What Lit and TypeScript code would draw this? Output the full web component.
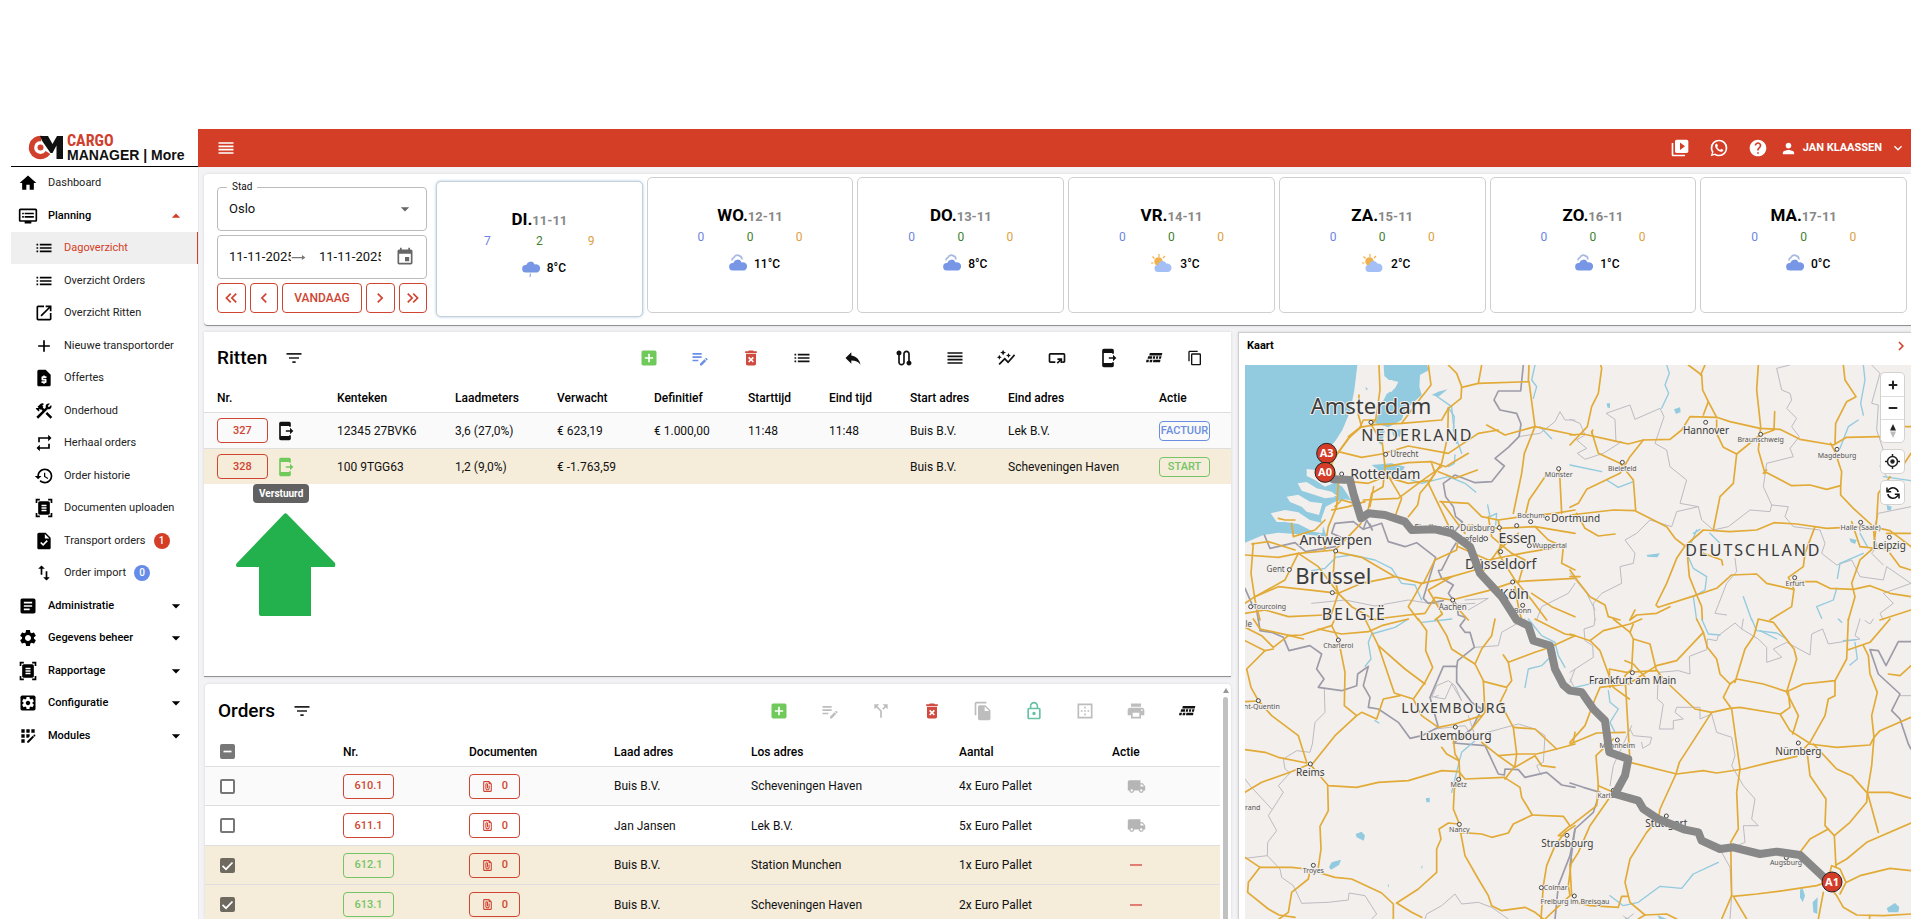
import { LitElement, html, svg, css, nothing } from "lit";
import { customElement } from "lit/decorators.js";
import { classMap } from "lit/directives/class-map.js";

const GEAR =
  "M19.14 12.94c.04-.3.06-.61.06-.94 0-.32-.02-.64-.07-.94l2.03-1.58c.18-.14.23-.41.12-.61l-1.92-3.32c-.12-.22-.37-.29-.59-.22l-2.39.96c-.5-.38-1.03-.7-1.62-.94l-.36-2.54c-.04-.24-.24-.41-.48-.41h-3.84c-.24 0-.43.17-.47.41l-.36 2.54c-.59.24-1.13.57-1.62.94l-2.39-.96c-.22-.08-.47 0-.59.22L2.74 8.87c-.12.21-.08.47.12.61l2.03 1.58c-.05.3-.09.63-.09.94s.02.64.07.94l-2.03 1.58c-.18.14-.23.41-.12.61l1.92 3.32c.12.22.37.29.59.22l2.39-.96c.5.38 1.03.7 1.62.94l.36 2.54c.05.24.24.41.48.41h3.84c.24 0 .44-.17.47-.41l.36-2.54c.59-.24 1.13-.56 1.62-.94l2.39.96c.22.08.47 0 .59-.22l1.92-3.32c.12-.22.07-.47-.12-.61l-2.01-1.58zM12 15.6c-1.98 0-3.6-1.62-3.6-3.6s1.62-3.6 3.6-3.6 3.6 1.62 3.6 3.6-1.62 3.6-3.6 3.6z";

const PATHS: Record<string, string> = {
  home: "M10 20v-6h4v6h5v-8h3L12 3 2 12h3v8z",
  dvr: "M21 3H3c-1.1 0-2 .9-2 2v12c0 1.1.9 2 2 2h5v2h8v-2h5c1.1 0 1.99-.9 1.99-2L23 5c0-1.1-.9-2-2-2zm0 14H3V5h18v12zm-2-9H8v2h11V8zm0 4H8v2h11v-2zM7 8H5v2h2V8zm0 4H5v2h2v-2z",
  list: "M3 13h2v-2H3v2zm0 4h2v-2H3v2zm0-8h2V7H3v2zm4 4h14v-2H7v2zm0 4h14v-2H7v2zM7 7v2h14V7H7z",
  open: "M19 19H5V5h7V3H5c-1.11 0-2 .9-2 2v14c0 1.1.89 2 2 2h14c1.1 0 2-.9 2-2v-7h-2v7zM14 3v2h3.59l-9.83 9.83 1.41 1.41L19 6.41V10h2V3h-7z",
  add: "M19 13h-6v6h-2v-6H5v-2h6V5h2v6h6v2z",
  quote: "M14 2H6c-1.1 0-1.99.9-1.99 2L4 20c0 1.1.89 2 1.99 2H18c1.1 0 2-.9 2-2V8l-6-6zm1 10h-4v1h3c.55 0 1 .45 1 1v3c0 .55-.45 1-1 1h-1v1h-2v-1H9v-2h4v-1h-3c-.55 0-1-.45-1-1v-3c0-.55.45-1 1-1h1V9h2v1h2v2z",
  tools: "M13.78 15.3l6 6 2.11-2.16-6-6-2.11 2.16zM17.5 10c1.93 0 3.5-1.57 3.5-3.5 0-.58-.16-1.12-.41-1.6l-2.7 2.7-1.49-1.49 2.7-2.7c-.48-.25-1.02-.41-1.6-.41C15.57 3 14 4.57 14 6.5c0 .41.08.8.21 1.16l-1.85 1.85-1.78-1.78.71-.71-1.41-1.41L12 3.49c-1.17-1.17-3.07-1.17-4.24 0L4.22 7.03l1.41 1.41H2.81l-.71.71 3.54 3.54.71-.71V9.15l1.41 1.41.71-.71 1.78 1.78-7.41 7.41 2.12 2.12L16.34 9.79c.36.13.75.21 1.16.21z",
  repeat: "M7 7h10v3l4-4-4-4v3H5v6h2V7zm10 10H7v-3l-4 4 4 4v-3h12v-6h-2v4z",
  history: "M13 3c-4.97 0-9 4.03-9 9H1l3.89 3.89.07.14L9 12H6c0-3.87 3.13-7 7-7s7 3.13 7 7-3.13 7-7 7c-1.93 0-3.68-.79-4.94-2.06l-1.42 1.42C8.27 19.99 10.51 21 13 21c4.97 0 9-4.03 9-9s-4.03-9-9-9zm-1 5v5l4.28 2.54.72-1.21-3.5-2.08V8H12z",
  scan: "M7 3H4v3H2V1h5v2zm15 3V1h-5v2h3v3h2zM7 21H4v-3H2v5h5v-2zm13-3v3h-3v2h5v-5h-2zM19 18c0 1.1-.9 2-2 2H7c-1.1 0-2-.9-2-2V6c0-1.1.9-2 2-2h10c1.1 0 2 .9 2 2v12zM15 8H9v2h6V8zm0 3H9v2h6v-2zm0 3H9v2h6v-2z",
  task: "M14 2H6c-1.1 0-1.99.9-1.99 2L4 20c0 1.1.89 2 1.99 2H18c1.1 0 2-.9 2-2V8l-6-6zm-3.06 16L7.4 14.46l1.41-1.41 2.12 2.12 4.24-4.24 1.41 1.41L10.94 18zM13 9V3.5L18.5 9H13z",
  swap: "M9 3L5 6.99h3V14h2V6.99h3L9 3zm7 14.01V10h-2v7.01h-3L15 21l4-3.99h-3z",
  article: "M19 3H5c-1.1 0-2 .9-2 2v14c0 1.1.9 2 2 2h14c1.1 0 2-.9 2-2V5c0-1.1-.9-2-2-2zm-5 14H7v-2h7v2zm3-4H7v-2h10v2zm0-4H7V7h10v2z",
  gear: GEAR,
  modules: "M10 4h4v4h-4zM4 16h4v4H4zM4 10h4v4H4zM4 4h4v4H4zM14 12.42V10h-4v4h2.42zM20.88 11.29l-1.17-1.17c-.16-.16-.42-.16-.58 0L18.25 11 20 12.75l.88-.88c.16-.16.16-.42 0-.58zM11 18.25V20h1.75l6.67-6.67-1.75-1.75zM16 4h4v4h-4z",
  lines: "M3 15h18v-2H3v2zm0 4h18v-2H3v2zm0-8h18V9H3v2zm0-6v2h18V5H3z",
  filter: "M10 18h4v-2h-4v2zM3 6v2h18V6H3zm3 7h12v-2H6v2z",
  addBox: "M19 3H5c-1.11 0-2 .9-2 2v14c0 1.1.89 2 2 2h14c1.1 0 2-.9 2-2V5c0-1.1-.9-2-2-2zm-2 10h-4v4h-2v-4H7v-2h4V7h2v4h4v2z",
  edit: "M3 10h11v2H3v-2zm0-2h11V6H3v2zm0 8h7v-2H3v2zm15.01-3.13.71-.71c.39-.39 1.02-.39 1.41 0l.71.71c.39.39.39 1.02 0 1.41l-.71.71-2.12-2.12zm-.71.71-5.3 5.3V21h2.12l5.3-5.3-2.12-2.12z",
  trash: "M6 19c0 1.1.9 2 2 2h8c1.1 0 2-.9 2-2V7H6v12zm2.46-7.12 1.41-1.41L12 12.59l2.12-2.12 1.41 1.41L13.41 14l2.12 2.12-1.41 1.41L12 15.41l-2.12 2.12-1.41-1.41L10.59 14l-2.13-2.12zM15.5 4l-1-1h-5l-1 1H5v2h14V4z",
  reply: "M10 9V5l-7 7 7 7v-4.1c5 0 8.5 1.6 11 5.1-1-5-4-10-11-11z",
  route: "M19 15.18V7c0-2.21-1.79-4-4-4s-4 1.79-4 4v10c0 1.1-.9 2-2 2s-2-.9-2-2V8.82C8.16 8.4 9 7.3 9 6c0-1.66-1.34-3-3-3S3 4.34 3 6c0 1.3.84 2.4 2 2.82V17c0 2.21 1.79 4 4 4s4-1.79 4-4V7c0-1.1.9-2 2-2s2 .9 2 2v8.18c-1.16.41-2 1.51-2 2.82 0 1.66 1.34 3 3 3s3-1.34 3-3c0-1.3-.84-2.4-2-2.82z",
  graph: "M14.06 9.94 12 9l2.06-.94L15 6l.94 2.06L18 9l-2.06.94L15 12l-.94-2.06zM4 14l.94-2.06L7 11l-2.06-.94L4 8l-.94 2.06L1 11l2.06.94L4 14zM8.5 9l1.09-2.41L12 5.5 9.59 4.41 8.5 2 7.41 4.41 5 5.5l2.41 1.09L8.5 9zM4.5 20.5l6-6.01 4 4L23 8.93l-1.41-1.41-7.09 7.97-4-4L3 19l1.5 1.5z",
  card: "M20 6H4c-1.100 0-2 .9-2 2v8c0 1.100.9 2 2 2h6v-2H4V8h16v8h-2v2h2c1.100 0 2-.9 2-2V8c0-1.100-.9-2-2-2zM11.600 17.500l3.200-3.200H12.500v-2h5.700v5.700h-2v-2.300L13 18.900z",
  phone: "M17 18H7V6h10v1h2V3c0-1.1-.9-2-2-2H7c-1.1 0-2 .9-2 2v18c0 1.1.9 2 2 2h10c1.1 0 2-.9 2-2v-4h-2v1zM22 12l-4-4v3h-5v2h5v3l4-4z",
  road: "M7 6h15l-.7 3H6.300zM5 10h5l-.6 3H4.300zM11 10h2.600l-.6 3h-2.600zM14.800 10h2.400l-.6 3h-2.400zM18.400 10H21l-.7 3h-2.500zM3 14h3l-.6 3H2.400zM7.200 14h3l-.6 3H6.500zM11.400 14h8.400l-.6 3h-8.500z",
  copy: "M16 1H4c-1.1 0-2 .9-2 2v14h2V3h12V1zm3 4H8c-1.1 0-2 .9-2 2v14c0 1.1.9 2 2 2h11c1.1 0 2-.9 2-2V7c0-1.1-.9-2-2-2zm0 16H8V7h11v14z",
  split: "M14 4l2.29 2.29-2.88 2.88 1.42 1.42 2.88-2.88L20 10V4zm-4 0H4v6l2.29-2.29 4.71 4.7V20h2v-8.41l-5.29-5.3z",
  files: "M16 1H4c-1.1 0-2 .9-2 2v14h2V3h12V1zm-1 4l6 6v10c0 1.1-.9 2-2 2H7.99C6.89 23 6 22.1 6 21l.01-14c0-1.1.89-2 1.99-2h7zm-1 7h5.5L14 6.5V12z",
  lock: "M12 17c1.1 0 2-.9 2-2s-.9-2-2-2-2 .9-2 2 .9 2 2 2zm6-9h-1V6c0-2.76-2.24-5-5-5S7 3.24 7 6v2H6c-1.1 0-2 .9-2 2v10c0 1.1.9 2 2 2h12c1.1 0 2-.9 2-2V10c0-1.1-.9-2-2-2zM8.9 6c0-1.71 1.39-3.1 3.1-3.1s3.1 1.39 3.1 3.1v2H8.9V6zM18 20H6V10h12v10z",
  border: "M13 7h-2v2h2V7zm0 4h-2v2h2v-2zm4 0h-2v2h2v-2zM3 3v18h18V3H3zm16 16H5V5h14v14zm-6-4h-2v2h2v-2zm-4-4H7v2h2v-2z",
  print: "M19 8H5c-1.66 0-3 1.34-3 3v6h4v4h12v-4h4v-6c0-1.66-1.34-3-3-3zm-3 11H8v-5h8v5zm3-7c-.55 0-1-.45-1-1s.45-1 1-1 1 .45 1 1-.45 1-1 1zm-1-9H6v4h12V3z",
  truck: "M20 8h-3V4H3c-1.1 0-2 .9-2 2v11h2c0 1.66 1.34 3 3 3s3-1.34 3-3h6c0 1.66 1.34 3 3 3s3-1.34 3-3h2v-5l-3-4zM6 18.5c-.83 0-1.5-.67-1.5-1.5s.67-1.5 1.5-1.5 1.5.67 1.5 1.5-.67 1.5-1.5 1.500zm13.500-9l1.960 2.500H17V9.500h2.500zm-1.500 9c-.83 0-1.500-.67-1.500-1.500s.67-1.500 1.500-1.500 1.500.67 1.500 1.500-.67 1.500-1.500 1.500z",
  minus: "M4 11h16v2H4z",
  video: "M4 6H2v14c0 1.1.9 2 2 2h14v-2H4V6zm16-4H8c-1.1 0-2 .9-2 2v12c0 1.1.9 2 2 2h12c1.1 0 2-.9 2-2V4c0-1.1-.9-2-2-2zm-8 12.5v-9l6 4.5-6 4.5z",
  whatsapp: "M16.75 13.96c.25.13.41.2.46.3.06.11.04.61-.21 1.18-.2.56-1.24 1.1-1.7 1.12-.46.02-.47.36-2.96-.73-2.49-1.09-3.99-3.75-4.11-3.92-.12-.17-.96-1.38-.92-2.61.05-1.22.69-1.8.95-2.04.24-.26.51-.29.68-.26h.47c.15 0 .36-.06.55.45l.69 1.87c.06.13.1.28.01.44l-.27.41-.39.42c-.12.12-.26.25-.12.5.12.26.62 1.09 1.32 1.78.91.88 1.71 1.17 1.95 1.3.24.14.39.12.54-.04l.81-.94c.19-.25.35-.19.58-.11l1.67.88M12 2a10 10 0 0 1 10 10 10 10 0 0 1-10 10c-1.97 0-3.8-.57-5.35-1.55L2 22l1.55-4.65A9.969 9.969 0 0 1 2 12 10 10 0 0 1 12 2m0 2a8 8 0 0 0-8 8c0 1.72.54 3.31 1.46 4.61L4.5 19.5l2.89-.96A7.95 7.95 0 0 0 12 20a8 8 0 0 0 8-8 8 8 0 0 0-8-8z",
  help: "M12 2C6.48 2 2 6.48 2 12s4.48 10 10 10 10-4.48 10-10S17.52 2 12 2zm1 17h-2v-2h2v2zm2.07-7.75l-.9.92C13.45 12.9 13 13.5 13 15h-2v-.5c0-1.1.45-2.1 1.17-2.83l1.24-1.26c.37-.36.59-.86.59-1.41 0-1.1-.9-2-2-2s-2 .9-2 2H8c0-2.21 1.79-4 4-4s4 1.79 4 4c0 .88-.36 1.68-.93 2.25z",
  person: "M12 12c2.21 0 4-1.79 4-4s-1.79-4-4-4-4 1.79-4 4 1.79 4 4 4zm0 2c-2.67 0-8 1.34-8 4v2h16v-2c0-2.66-5.33-4-8-4z",
  expand: "M16.59 8.59 12 13.17 7.41 8.59 6 10l6 6 6-6z",
  down: "M7 10l5 5 5-5z",
  up: "M7 14l5-5 5 5z",
  arrow: "M1 11h16.500V8l5.500 4-5.500 4v-3H1z",
  event: "M17 12h-5v5h5v-5zM16 1v2H8V1H6v2H5c-1.11 0-1.99.9-1.99 2L3 19c0 1.1.89 2 2 2h14c1.1 0 2-.9 2-2V5c0-1.1-.9-2-2-2h-1V1h-2zm3 18H5V8h14v11z",
  left: "M15.41 7.41 14 6l-6 6 6 6 1.41-1.41L10.83 12z",
  right: "M10 6 8.59 7.41 13.17 12l-4.58 4.59L10 18l6-6z",
  first: "M17.59 18 19 16.59 14.42 12 19 7.41 17.59 6l-6 6zM11 18l1.41-1.41L7.83 12l4.58-4.59L11 6l-6 6z",
  last: "M6.41 6 5 7.41 9.58 12 5 16.59 6.41 18l6-6zM13 6l-1.41 1.41L16.17 12l-4.58 4.59L13 18l6-6z",
  clip: "M15 2H6c-1.1 0-2 .9-2 2v16c0 1.1.9 2 2 2h12c1.1 0 2-.9 2-2V7l-5-5zM6 20V4h8v4h4v12H6zm10-10v5c0 2.21-1.79 4-4 4s-4-1.79-4-4V8.5C8 7.12 9.12 6 10.5 6S13 7.12 13 8.5V15h-2V8.5c0-.28-.22-.5-.5-.5s-.5.22-.5.5V15c0 1.1.9 2 2 2s2-.9 2-2v-5h2z",
};

const icon = (name: string, size = 20) =>
  name === "settingsBox"
    ? html`<svg class="icon" width=${size} height=${size} viewBox="0 0 24 24" aria-hidden="true">
        <rect x="3" y="3" width="18" height="18" rx="2" fill="currentColor" />
        <path d=${GEAR} fill="#fff" transform="translate(3 3) scale(.75)" />
      </svg>`
    : html`<svg class="icon" width=${size} height=${size} viewBox="0 0 24 24" aria-hidden="true">
        <path d=${PATHS[name]} fill="currentColor" />
      </svg>`;

/* ---------- map ---------- */

/* Survey sheets: each one holds its geometry in thirds of a pixel. */
interface Sheet {
  dx: number;
  dy: number;
  roads: string[];
  borders?: string[];
  regions?: string[];
  rivers?: string[];
  lakes?: string[];
  land?: string[];
}

const SHEETS: Sheet[] = [
  {
    dx: -10, dy: -45,
    lakes: [
      "M30 135H367L358 210L345 275L322 330L303 360L270 400L262 440L290 480L322 500L345 535L300 545L272 560L258 600L275 650L230 645L180 642L130 638L85 645L30 668Z",
      "M446 135L575 135L582 150L555 165L553 200L560 225L510 270L500 300L460 322L420 310L427 290L435 262L455 222L480 205L490 185L462 180L448 168Z",
      "M430 335L450 330L440 375L432 370Z", "M390 202L398 205L396 212Z", "M590 225L610 215L638 208L610 230Z",
      "M470 330L500 328L495 350L475 348Z", "M410 435L470 430L510 440L500 455L430 450Z",
    ],
    land: [
      "M215 447L262 452L295 490L270 500L240 480L215 468Z",
      "M188 490L215 486L245 505L290 515L310 530L270 535L240 525L200 512Z",
      "M155 530L190 524L225 545L262 550L252 585L215 575L200 560L165 546Z",
      "M107 580L150 570L190 577L225 600L265 610L262 640L235 635L190 612L150 606L125 606Z",
      "M450 180L470 180L488 190L470 215L455 215Z",
    ],
    rivers: ["M300 530L355 540", "M600 225L650 260L655 310L665 370", "M640 262L658 290L655 330L680 400", "M430 450L500 470L560 490L640 470L690 490L722 516", "M900 135L890 180L905 200L895 235", "M915 320L950 356", "M758 555L765 590L785 580L782 615", "M230 752L270 745L300 715", "M300 712L350 705L420 720L470 745", "M470 745L500 790L540 795L560 840", "M660 405L658 430L640 440"],
    regions: ["M850 350L915 340L960 305L975 275L990 300L1020 300", "M230 850L330 840L420 858L520 840L570 848L640 855L720 850", "M905 900L920 860L1000 820L1020 790", "M690 840L760 835L700 870"],
    borders: [
      "M865 135L857 213L790 213L777 240L795 270L845 280L858 312L852 350L820 382L780 415L808 438L770 485L720 488L660 465L625 490L632 530L655 560L662 590L682 606L655 640L672 655L650 690L620 750L610 752L620 775L655 795L640 820L665 855L670 885L690 892",
      "M88 645L105 685L180 668L212 695L300 680L325 655L290 640L300 610L355 605L385 628L440 610L460 665L510 680L545 668L602 712L565 835L580 850L625 842",
      "M30 805L50 850L65 870L70 900", "M385 628L395 600L412 630L405 612",
    ],
    roads: [
      "M432 135L435 210L422 300L408 316", "M580 135L588 195L545 250L500 310L420 314L375 322L385 300L420 300", "M372 225L370 285L380 320L340 355L300 412L290 432L310 490L305 560L280 620L268 690",
      "M410 316L442 370L450 440L444 500L410 520L395 590", "M450 440L520 428L590 425L632 440L700 400", "M640 265L678 235L680 200L665 160L640 135",
      "M680 202L730 190L880 185L882 135", "M740 135L730 190", "M882 185L900 320L868 400L860 460L835 580", "M755 315L810 345L900 320L1020 345",
      "M640 265L638 350L620 430L580 490L642 620L675 650", "M500 310L620 300L640 265", "M310 395L380 412L440 402L520 378L640 400L730 340L790 330",
      "M320 482L400 490L450 470L520 490L590 480", "M385 540L490 535L550 490L620 440", "M610 455L660 475L727 450", "M590 430L600 460L580 490L555 520L548 555L520 590",
      "M615 545L700 550L740 590L790 600L860 590L960 580L1020 570", "M790 600L800 660L790 700L840 780L890 840L935 900", "M700 615L790 625L900 620L1020 640",
      "M670 680L760 720L860 700L980 680", "M980 580L975 480L972 450", "M930 470L882 540L870 590", "M345 350L300 410", "M340 350L375 322",
      "M455 460L500 535L480 590", "M416 500L405 560", "M300 560L320 540L350 548", "M390 545L340 560L290 570", "M620 545L660 600L690 640", "M760 590L770 650L830 700L870 720L850 790",
      "M850 640L790 690L740 760", "M900 620L940 660L985 680L980 730L1020 750",
      "M30 705L130 712L190 700L300 690L340 650L378 610", "M300 690L295 760L310 820", "M300 695L380 712L480 770L560 790L650 770L720 750", "M190 700L150 780L60 830L30 850", "M190 700L250 740L310 820",
      "M310 820L380 790L480 770", "M310 820L350 860L420 900", "M60 830L130 800L240 812L310 820", "M560 790L520 860L550 900", "M650 770L580 810L622 882L600 900", "M650 840L760 812L840 785L1020 775",
      "M55 670L48 760L60 840L75 900", "M50 672L100 665L180 690", "M650 840L600 832L570 880L520 885L400 900", "M310 820L290 880L270 900", "M30 880L90 870L160 890L270 885",
      "M650 845L700 900", "M180 600L150 600L130 595", "M170 610L175 650L240 630L270 600", "M670 650L665 690L600 720L565 790", "M840 800L850 860L860 900", "M890 820L950 860L1020 890",
    ],
  },
  {
    dx: 325, dy: -45,
    lakes: ["M110 250L120 250L120 265L112 262Z", "M312 268L330 262L332 276L318 282Z", "M230 705L270 700L262 712L232 710Z", "M838 655L860 660L855 672L842 666Z", "M950 555L965 560L962 572L952 570Z"],
    rivers: ["M290 135L298 160L285 195L296 220L275 265", "M880 135L885 180L872 250L880 285", "M865 300L835 320L810 385", "M0 435L95 455", "M110 480L145 502L190 485", "M380 630L350 700L370 745L410 770L405 810L370 830L380 900", "M520 830L545 900", "M880 700L810 730L802 775", "M800 805L790 840L740 860L755 895", "M870 640L892 680", "M940 470L1023 482", "M420 640L450 670", "M370 640L390 628"],
    regions: [
      "M0 298L30 310L45 345L20 360L50 385L22 400L45 418L100 400L155 365L138 365L135 298L108 280L180 255L195 298L270 265L282 290L255 370L290 390L300 440L350 480L330 550L385 560L395 600L430 630L475 620L540 570L600 575L605 555L655 560L645 590L670 620L750 630L765 670L755 700L800 735L845 720L870 770L940 780L950 740L1023 790",
      "M660 135L620 145L635 210L660 220L665 240L650 265L680 295L665 320L688 350L660 385L670 410L590 430L580 500L605 555",
      "M905 135L930 160L905 250L925 255L920 330L940 390L930 440L950 470", "M385 560L320 575L305 620L240 600L200 640L165 660L195 700L190 730L150 740L155 790L95 820L70 850L75 900", "M495 715L500 755L470 790L435 880L470 885", "M1023 560L925 580L910 630L920 680L905 700L940 735", "M1023 790L940 820L970 850L930 880L940 900", "M0 760L50 820L75 870",
    ],
    roads: [
      "M92 135L95 145L85 220L65 260L52 320L0 375", "M0 345L40 342L130 362L175 372L220 360L300 358L335 330L360 290L440 292L480 305L570 325L630 328L690 358L790 375L830 352L930 350", "M65 335L85 400L150 430L190 480L197 570",
      "M220 360L180 410L150 460L50 508L25 550L0 562", "M355 135L395 165L398 210L415 245L440 292", "M405 135L392 165", "M415 245L400 285", "M440 300L440 340L460 382L500 402L490 490L450 530L430 630",
      "M565 135L560 210L572 320L565 390L585 460", "M500 402L570 345", "M614 275L612 330L572 345", "M585 455L665 497L720 495L770 508L812 497L815 455L795 395L782 370", "M820 135L825 180L858 230L830 245L797 310L795 372", "M812 497L812 525L850 565L905 615",
      "M0 585L130 570L195 572L290 620L315 655L345 678L400 630L480 635L560 630L612 608L680 612L770 625L830 622L905 620L960 632L1023 680", "M345 678L320 715L290 790L258 855L265 862L365 830L440 805L485 765L560 762L590 790L670 808",
      "M350 680L358 770L380 825L395 860L397 900", "M735 620L705 700L700 740L655 772L672 808L665 860L600 900", "M670 785L740 785L780 805L850 808L900 797L960 820L1023 830", "M910 620L915 680L870 720L845 790L855 830L835 900", "M960 470L925 520L920 600L915 650", "M845 605L870 680L960 690",
      "M1023 320L1005 320", "M1023 400L1000 435", "M0 750L25 785L60 830L105 855L115 890L150 900", "M0 770L30 770", "M180 900L200 885L260 880L300 860", "M20 580L45 625L85 648L135 642", "M400 700L455 720L458 735", "M960 700L990 740L1023 750", "M1023 640L950 640", "M930 900L1023 870", "M580 460L590 450", "M65 340L68 330", "M180 900L195 870",
    ],
  },
  {
    dx: -10, dy: 254,
    lakes: ["M362 645L380 638L390 650L386 665L365 655Z", "M282 745L290 730L318 722L312 738L288 752Z", "M572 538L584 536L584 550L575 550Z", "M558 745L563 738L561 750Z", "M458 798L462 796L461 806Z"],
    rivers: ["M520 0L480 25L410 45L400 70L408 120L390 142", "M720 365L680 400L672 430L650 520", "M880 0L920 50L960 70L970 110L990 145", "M960 100L920 140L880 150L870 205", "M420 305L432 312", "M560 10L650 0"],
    regions: ["M268 210L270 280L240 310L232 375L225 400L185 395L145 420L150 450L165 462L130 500L145 520L100 590L125 635L98 670L97 710L135 750L140 775L175 800L200 853L280 850L340 843L342 822L390 830L425 885L410 900", "M30 480L45 500L110 570", "M30 718L97 710", "M570 900L575 885L620 860L660 825L680 855L730 850L770 865L820 900", "M610 230L590 235L605 200L640 185L660 200L680 245L650 195L630 240L600 235", "M700 290L720 350L850 315L900 330L930 350L925 430L905 440L918 468", "M600 330L690 320L710 350", "M1020 150L1005 190", "M720 85L790 80L800 40L870 0"],
    borders: ["M70 0L75 35L110 40L145 55L162 95L225 80L260 105L245 150L267 180L250 205L320 215L365 200L368 165L400 142L385 200L405 235L400 265L430 270L490 310L525 358L560 350L610 325L585 235L625 142L665 142L665 190L710 250L740 270L710 330L655 372L750 380L790 465L808 468L810 450L850 452L870 475L935 460L980 498L1020 505", "M690 0L675 20L690 40L705 40L718 85L668 125L665 145", "M1020 630L1005 710L970 800L960 900"],
    roads: [
      "M30 25L80 50L115 85L160 50L200 48L290 20L300 0", "M115 90L90 95L35 150L48 205L70 245L110 290L190 350L215 430", "M30 65L90 95", "M30 248L70 246", "M55 0L75 30L165 50L205 60", "M290 20L310 60L330 160L328 260L365 290L300 350L232 435", "M250 30L320 45L400 38L440 20L520 0", "M390 0L430 80L478 222L535 240L570 190L593 145L572 95L575 35L550 0",
      "M430 80L510 150L570 195", "M365 290L380 280L425 300L445 240L495 230", "M535 240L560 290L610 325L660 315L740 290", "M225 435L280 500L365 505L430 490L520 485L620 455L672 458L690 480L808 475", "M30 392L90 400L130 415L215 432", "M30 520L80 490L165 460L225 435",
      "M278 500L280 575L255 622L258 690L250 745", "M30 715L75 745L170 745L215 750L300 775L350 780L440 822L475 855L475 900", "M75 745L40 790L38 820L100 870L132 888L180 895", "M225 755L220 780L170 820L160 880L132 900", "M485 852L550 810L605 760L605 690L618 660L612 630L640 612L672 615L690 710L730 780L760 830L770 860L800 875L870 865L900 880L925 900",
      "M485 852L530 880L560 895", "M655 360L660 405L672 425L675 480L658 510L655 570L672 612", "M620 385L635 405L672 425", "M672 640L740 645L770 655L820 642L835 615L892 588L860 535L855 505L808 475", "M892 588L985 592L1005 620L970 650L985 650", "M605 0L635 50L650 90L720 135L745 185L750 280L710 330",
      "M780 0L770 50L740 90L720 135", "M745 187L815 205L830 185L820 130L900 100L945 85", "M820 130L805 108", "M815 210L795 250L835 325L845 405L840 440L810 480", "M835 325L900 330L965 390L1020 375", "M740 370L790 410L850 405L905 405L965 390", "M790 410L840 445L900 410L920 440L960 445", "M945 85L1020 50", "M900 0L990 45L1020 50",
      "M1020 620L990 640L960 680L935 740L925 800L918 900", "M1010 720L1000 800L1005 830L930 900", "M1015 370L1020 340",
    ],
  },
  {
    dx: 325, dy: 254,
    lakes: ["M690 812L698 808L705 830L698 850L690 835Z", "M728 850L743 835L742 885L730 880Z", "M950 868L975 852L988 865L985 880L955 880Z", "M262 888L290 900L268 900Z", "M165 895L180 900L165 900Z"],
    rivers: ["M115 215L120 250L145 270L120 310L135 340", "M445 730L370 765L335 808L270 802L205 850L160 860L120 830", "M545 0L560 35L620 42L650 60", "M570 35L620 60", "M855 70L862 120L840 138", "M820 65L860 62", "M15 205L80 190", "M395 0L415 45L450 48", "M805 0L815 10"],
    regions: [
      "M75 0L72 20L42 30L45 65L68 80L70 115L0 160", "M0 180L15 210", "M520 0L515 30L495 12L445 50L440 65L412 60L410 92L358 112L360 165L325 155L265 160L262 240L280 255L268 330L310 330L310 305L340 300L315 280L320 265L390 265L390 300L425 285L440 340L485 355L495 410L485 440L520 500L555 540L545 600L565 620L520 620L525 670L455 700L480 745L485 830L480 900",
      "M515 30L565 60L590 85L590 130L635 115L610 90L650 70L720 108L725 45L758 30L775 75L870 60L855 50L870 0", "M180 330L190 350L245 355L240 375L218 388L215 370", "M160 890L170 900L190 885", "M910 0L900 15L885 5", "M990 230L1023 230",
      "M185 320L130 440L120 500",
    ],
    borders: ["M1023 68L985 68L948 140L925 95L900 92L925 165L990 225L965 275L990 300L1015 375L1023 390", "M0 492L40 505L90 520L70 580L15 630L0 740"],
    roads: [
      "M0 45L60 65L90 95L130 205L178 240", "M60 65L100 35L180 15L215 0", "M130 0L180 40L190 15", "M180 40L190 60L240 75L258 150L280 180L375 270L425 280L480 268L510 265L630 285L660 335L718 372", "M190 60L185 150L165 170L180 430L320 465L400 455L440 462L520 450L600 430L680 412L718 372",
      "M0 370L45 320L75 240L90 205L175 195L260 140L320 125L400 40L380 0", "M0 375L80 342L165 340", "M400 40L412 85L440 120L450 165L480 195L460 235L485 270L510 450L500 520L505 630L482 670L485 830", "M480 195L500 180L580 195L650 218L680 120L672 90L610 10L565 0L552 50L525 90L495 190",
      "M650 218L700 195L795 185L830 120L835 0", "M650 220L685 290L668 345", "M655 220L660 265L632 285", "M795 185L795 230L775 240L765 290L720 370", "M835 92L900 70L960 0", "M880 80L895 110L900 165L922 220L905 290L912 355L905 440L892 520L925 640", "M718 375L800 385L900 378L912 355L930 335L1023 295", "M712 405L720 470L768 540L765 620L793 650L798 745",
      "M730 375L800 450L845 470L890 520L960 520L1023 538", "M690 700L720 660L775 630", "M793 650L840 610L890 550L892 520", "M798 738L830 720L890 670L1023 612", "M425 280L380 350L328 430L318 465L270 570L265 600L230 640L180 720L165 790L180 850L225 888L290 885L320 900", "M85 500L78 410L130 360", "M85 500L130 520L60 620L25 700L0 740L5 830", "M85 500L80 560L0 622",
      "M15 850L60 860L145 865L155 832L172 832", "M490 832L560 825L640 815L740 800L770 790", "M770 790L800 830L820 865L860 888L940 890L1023 885", "M760 820L745 900", "M830 790L870 770L960 748L1023 755", "M485 830L455 900", "M490 832L530 900", "M780 760L785 740L810 750L828 790L810 825", "M955 165L990 170L1023 140", "M225 888L205 900", "M120 205L118 150L170 160L260 155", "M900 890L898 900", "M165 125L190 135L230 180",
    ],
  },
];

const ROUTE =
  "M295 478L345 480L355 520L378 595L400 580L450 585L510 605L530 630L600 628L650 640L705 680L735 760L800 830L845 900L880 917L895 962L945 977L960 1047L985 1095L1005 1112L1040 1117L1075 1167L1110 1202L1123 1297L1180 1317L1170 1367L1140 1422L1210 1442L1225 1467L1270 1497L1350 1529L1390 1537L1400 1562L1455 1587L1495 1582L1575 1602L1625 1595L1695 1605L1775 1680";

/* [text, centre x, baseline y, size class] in thirds of a pixel from the sheet origin */
const LABELS: [string, number, number, string][] = [
  ["Amsterdam", 408, 283, "xl"], ["NEDERLAND", 547, 363, "land"], ["Utrecht", 508, 411, "s"], ["Rotterdam", 451, 478, "l"],
  ["Antwerpen", 302, 674, "l"], ["Gent", 122, 757, "s"], ["Brussel", 295, 793, "xl"], ["Tourcoing", 104, 866, "xs"], ["BELGIË", 358, 900, "land"],
  ["Eindhoven", 598, 632, "s"], ["Duisburg", 728, 632, "s"], ["Krefeld", 705, 665, "s"], ["Essen", 847, 669, "l"], ["Bochum", 888, 594, "xs"], ["Dortmund", 1022, 606, "m"],
  ["Wuppertal", 944, 684, "xs"], ["Düsseldorf", 797, 746, "l"], ["Köln", 838, 836, "l"], ["Bonn", 863, 879, "xs"], ["Aachen", 653, 870, "s"], ["Münster", 971, 471, "xs"],
  ["Hannover", 1413, 341, "m"], ["Braunschweig", 1577, 367, "xs"], ["Bielefeld", 1162, 452, "xs"], ["Magdeburg", 1806, 413, "xs"], ["DEUTSCHLAND", 1555, 707, "land"],
  ["Halle (Saale)", 1877, 631, "xs"], ["Leipzig", 1963, 687, "m"], ["Erfurt", 1680, 799, "xs"],
  ["le", 41, 922, "s"], ["Charleroi", 310, 984, "xs"], ["LUXEMBOURG", 657, 1180, "land2"], ["Luxembourg", 662, 1260, "ml"], ["Saint-Quentin", 66, 1168, "xs"],
  ["Reims", 226, 1367, "m"], ["Metz", 671, 1402, "xs"], ["Clermont-Ferrand", -12, 1470, "xs"], ["Nancy", 673, 1537, "xs"], ["Troyes", 235, 1660, "xs"],
  ["Strasbourg", 997, 1581, "m"], ["Colmar", 962, 1710, "xs"], ["Freiburg im Breisgau", 1020, 1753, "xs"],
  ["Frankfurt am Main", 1193, 1093, "m"], ["Mannheim", 1147, 1284, "xs"], ["Karlsruhe", 1135, 1434, "xs"], ["Stuttgart", 1294, 1522, "m"],
  ["Nürnberg", 1690, 1305, "m"], ["Augsburg", 1653, 1636, "xs"],
];

const TOWNS: [number, number][] = [
  [408, 307], [452, 403], [320, 462], [302, 693], [163, 749], [292, 818], [47, 860], [793, 623], [752, 656], [797, 695], [845, 617], [887, 605], [937, 595], [883, 677],
  [833, 786], [863, 856], [653, 840], [971, 446], [1412, 307], [1577, 343], [1162, 427], [1806, 388], [1877, 607], [1963, 652], [1679, 773], [310, 960], [661, 1221],
  [70, 1142], [226, 1332], [671, 1378], [673, 1513], [235, 1636], [996, 1546], [919, 1703], [1018, 1728], [1192, 1058], [1147, 1260], [1135, 1411], [1294, 1488], [1690, 1269], [1654, 1613],
];

const PINS: [string, number, number][] = [["A3", 275, 400], ["A0", 270, 457], ["A1", 1791, 1686]];

@customElement("route-map")
export class RouteMap extends LitElement {
  static styles = css`
    :host { display: block; position: relative; overflow: hidden; background: #f2efec; }
    .canvas { position: absolute; inset: 0; width: 100%; height: 100%; font-family: "Noto Sans", sans-serif; }
    .water { fill: #92cadf; }
    .ground { fill: #f2efec; }
    .river, .road, .border, .region, .route { fill: none; stroke-linejoin: round; stroke-linecap: round; }
    .river { stroke: #92cadf; stroke-width: 4; }
    .road { stroke: #e2aa36; stroke-width: 5; }
    .border { stroke: #9d9ba8; stroke-width: 5; }
    .region { stroke: #bdbac2; stroke-width: 3; }
    .route { stroke: #888; stroke-width: 24; }
    .town { fill: #f8f6f4; stroke: #444; stroke-width: 3; }
    .label { fill: #3c3c3c; stroke: #f2efec; stroke-width: 2px; paint-order: stroke; stroke-linejoin: round; text-anchor: middle; }
    .xl { font-size: 22px; }
    .l { font-size: 14px; }
    .ml { font-size: 12px; }
    .m { font-size: 10px; }
    .s { font-size: 8px; fill: #555; }
    .xs { font-size: 7px; fill: #555; }
    .land { font-size: 16px; letter-spacing: 2px; }
    .land2 { font-size: 14px; letter-spacing: 1px; }
    .pin circle { fill: #d43c27; stroke: #222; stroke-width: 1; }
    .pin text { fill: #fff; font-size: 11px; font-weight: 700; text-anchor: middle; }
    .controls { position: absolute; top: 8px; right: 7px; display: flex; flex-direction: column; gap: 8px; }
    .group { display: flex; flex-direction: column; border-radius: 4px; background: #fff; box-shadow: 0 0 0 1px #d4d2cf; overflow: hidden; }
    .control { display: grid; place-items: center; width: 23px; height: 23px; padding: 0; border: 0; background: none; color: #222; }
    .control + .control { border-top: 1px solid #ddd; }
  `;

  render() {
    const px = (v: number) => v / 3 - 10;
    const py = (v: number) => v / 3 - 45;
    return html`
      <svg class="canvas" role="img" aria-label="Routekaart">
        ${SHEETS.map(
          (s) => svg`<g transform="translate(${s.dx} ${s.dy}) scale(.33333)">
            ${s.lakes?.map((d) => svg`<path class="water" d=${d} />`)}
            ${s.land?.map((d) => svg`<path class="ground" d=${d} />`)}
            ${s.regions?.map((d) => svg`<path class="region" d=${d} />`)}
            ${s.borders?.map((d) => svg`<path class="border" d=${d} />`)}
            ${s.rivers?.map((d) => svg`<path class="river" d=${d} />`)}
            ${s.roads.map((d) => svg`<path class="road" d=${d} />`)}
          </g>`
        )}
        ${LABELS.map(([t, x, y, c]) => svg`<text class="label ${c}" x=${px(x)} y=${py(y)}>${t}</text>`)}
        <g transform="translate(-10 -45) scale(.33333)">
          ${TOWNS.map(([x, y]) => svg`<circle class="town" cx=${x} cy=${y} r="6" />`)}
          <path class="route" d=${ROUTE} />
        </g>
        ${PINS.map(
          ([t, x, y]) => svg`<g class="pin"><circle cx=${px(x)} cy=${py(y)} r="10" /><text x=${px(x)} y=${py(y) + 4}>${t}</text></g>`
        )}
      </svg>
      <div class="controls">
        <div class="group">
          <button class="control" aria-label="Inzoomen"><svg width="12" height="12" viewBox="0 0 12 12"><path d="M6 2.500v7M2.500 6h7" stroke="currentColor" stroke-width="2" stroke-linecap="round" /></svg></button>
          <button class="control" aria-label="Uitzoomen"><svg width="12" height="12" viewBox="0 0 12 12"><path d="M2.500 6h7" stroke="currentColor" stroke-width="2" stroke-linecap="round" /></svg></button>
          <button class="control" aria-label="Noord boven"><svg width="12" height="16" viewBox="0 0 12 16"><path d="M6 1 9 7.500H3z" fill="#222" /><path d="M6 15 9 8.500H3z" fill="#bbb" /></svg></button>
        </div>
        <div class="group">
          <button class="control" aria-label="Mijn locatie"><svg width="15" height="15" viewBox="0 0 15 15"><circle cx="7.500" cy="7.500" r="5" fill="none" stroke="#222" stroke-width="1.500" /><circle cx="7.500" cy="7.500" r="2.200" fill="#222" /><path d="M7.500 0v3M7.500 12v3M0 7.500h3M12 7.500h3" stroke="#222" stroke-width="1.500" /></svg></button>
        </div>
        <div class="group">
          <button class="control" aria-label="Vernieuwen"><svg width="14" height="14" viewBox="0 0 14 14" fill="none" stroke="#111" stroke-width="1.500"><path d="M12.200 6A5.300 5.300 0 0 0 3 3.600L1.500 5.200M1.800 8A5.300 5.300 0 0 0 11 10.400L12.500 8.800" /><path d="M1 1.500V5.700H5.200M13 12.500V8.300H8.800" /></svg></button>
        </div>
      </div>
    `;
  }
}

/* ---------- page data ---------- */

interface NavItem { label: string; icon: string; sub?: boolean; active?: boolean; open?: boolean; badge?: string; tone?: string; }
const NAV: NavItem[] = [
  { label: "Dashboard", icon: "home" },
  { label: "Planning", icon: "dvr", open: true },
  { label: "Dagoverzicht", icon: "list", sub: true, active: true },
  { label: "Overzicht Orders", icon: "list", sub: true },
  { label: "Overzicht Ritten", icon: "open", sub: true },
  { label: "Nieuwe transportorder", icon: "add", sub: true },
  { label: "Offertes", icon: "quote", sub: true },
  { label: "Onderhoud", icon: "tools", sub: true },
  { label: "Herhaal orders", icon: "repeat", sub: true },
  { label: "Order historie", icon: "history", sub: true },
  { label: "Documenten uploaden", icon: "scan", sub: true },
  { label: "Transport orders", icon: "task", sub: true, badge: "1", tone: "red" },
  { label: "Order import", icon: "swap", sub: true, badge: "0", tone: "blue" },
  { label: "Administratie", icon: "article", open: false },
  { label: "Gegevens beheer", icon: "gear", open: false },
  { label: "Rapportage", icon: "scan", open: false },
  { label: "Configuratie", icon: "settingsBox", open: false },
  { label: "Modules", icon: "modules", open: false },
];

const DAYS: [string, string, number, number, number, string, string][] = [
  ["DI.", "11-11", 7, 2, 9, "rain", "8°C"],
  ["WO.", "12-11", 0, 0, 0, "cloud", "11°C"],
  ["DO.", "13-11", 0, 0, 0, "cloud", "8°C"],
  ["VR.", "14-11", 0, 0, 0, "sun", "3°C"],
  ["ZA.", "15-11", 0, 0, 0, "sun", "2°C"],
  ["ZO.", "16-11", 0, 0, 0, "cloud", "1°C"],
  ["MA.", "17-11", 0, 0, 0, "cloud", "0°C"],
];

const TRIP_COLS: [string, number][] = [
  ["Nr.", 120], ["Kenteken", 118], ["Laadmeters", 102], ["Verwacht", 97], ["Definitief", 94],
  ["Starttijd", 81], ["Eind tijd", 81], ["Start adres", 98], ["Eind adres", 151], ["Actie", 85],
];
const TRIPS = [
  { nr: "327", sent: false, cells: ["12345 27BVK6", "3,6 (27,0%)", "€ 623,19", "€ 1.000,00", "11:48", "11:48", "Buis B.V.", "Lek B.V."], action: "FACTUUR", tone: "blue" },
  { nr: "328", sent: true, cells: ["100 9TGG63", "1,2 (9,0%)", "€ -1.763,59", "", "", "", "Buis B.V.", "Scheveningen Haven"], action: "START", tone: "green" },
];

const ORDER_COLS: [string, number][] = [
  ["", 125], ["Nr.", 126], ["Documenten", 145], ["Laad adres", 137], ["Los adres", 208], ["Aantal", 153], ["Actie", 121],
];
const ORDERS = [
  { nr: "610.1", checked: false, from: "Buis B.V.", to: "Scheveningen Haven", count: "4x Euro Pallet" },
  { nr: "611.1", checked: false, from: "Jan Jansen", to: "Lek B.V.", count: "5x Euro Pallet" },
  { nr: "612.1", checked: true, from: "Buis B.V.", to: "Station Munchen", count: "1x Euro Pallet" },
  { nr: "613.1", checked: true, from: "Buis B.V.", to: "Scheveningen Haven", count: "2x Euro Pallet" },
];

const TRIP_TOOLS: [string, string, string][] = [
  ["addBox", "green", "Rit toevoegen"], ["edit", "blue", "Bewerken"], ["trash", "red", "Verwijderen"], ["list", "", "Lijst"], ["reply", "", "Terug"], ["route", "", "Route"],
  ["lines", "", "Volgorde"], ["graph", "", "Optimaliseren"], ["card", "", "Doorsturen"], ["phone", "", "Naar chauffeur"], ["road", "tight", "Planbord"], ["copy", "tight", "Kopiëren"],
];
const ORDER_TOOLS: [string, string, string][] = [
  ["addBox", "green", "Order toevoegen"], ["edit", "off", "Bewerken"], ["split", "off", "Splitsen"], ["trash", "red", "Verwijderen"], ["files", "off", "Kopiëren"],
  ["lock", "teal", "Vergrendelen"], ["border", "off", "Kader"], ["print", "off", "Afdrukken"], ["road", "", "Planbord"],
];

const CLOUD = "M5 16.500a3.700 3.700 0 0 1-.3-7.400 1 1 0 0 0 .8-.6A4.300 4.300 0 0 1 13.400 8l.3.400A4.200 4.200 0 1 1 14 16.500z";
const weather = (kind: string) => html`<svg class="weather" width=${kind === "sun" ? 22 : 19} height="20" viewBox="0 0 ${kind === "sun" ? 22 : 19} 20" aria-hidden="true">
  ${kind === "sun"
    ? svg`<path d="M8 0v3M1.500 2.500l2 2M0 9h2.500M14 2l-2 2" stroke="#f0b04c" stroke-width="1.200" /><circle cx="7.500" cy="7.500" r="4.200" fill="#f0b04c" />
        <path d="M7 18a3.600 3.600 0 0 1 .2-7.200A4.300 4.300 0 0 1 15.400 9.500 4.300 4.300 0 1 1 17 18z" fill="#a3bff5" />`
    : kind === "cloud"
    ? svg`<path d="M4 6.500a3 3 0 0 1 2-3 3.500 3.500 0 0 1 5.500-1.500A2.500 2.500 0 0 1 13.500 5.500" fill="none" stroke="#a9b9e0" stroke-width="1.800" /><path d=${CLOUD} fill="#7797e6" />`
    : svg`<path d=${CLOUD} fill="#7797e6" transform="translate(0 -2)" /><path d="M9.500 15.500l-.5 3.500" stroke="#8eabe8" stroke-width="1.200" />`}
</svg>`;

const cols = (defs: [string, number][]) => {
  const total = defs.reduce((sum, [, w]) => sum + w, 0);
  return html`<colgroup>${defs.map(([, w]) => html`<col style="width:${(w / total) * 100}%" />`)}</colgroup>`;
};

const tools = (items: [string, string, string][]) => html`<div class="tools">
  ${items.map(([name, tone, label]) => html`<button class="tool ${tone}" aria-label=${label}>${icon(name)}</button>`)}
</div>`;

@customElement("app-root")
export class AppRoot extends LitElement {
  static styles = css`
    :host { display: block; height: 100vh; overflow: hidden; background: #fff; color: #111; font: 400 12px/16px Roboto, sans-serif; }
    *, *::before, *::after { box-sizing: border-box; }
    button, input, select { font: inherit; color: inherit; }
    button { cursor: pointer; }
    .icon, .weather { display: block; flex: none; }
    .shell { display: grid; grid-template: 38px 1fr / 187px minmax(0, 1fr); height: 100%; padding: 129px 0 0 11px; }

    .brand { display: flex; align-items: center; gap: 4px; padding-left: 17px; border-bottom: 1px solid #000; color: #111; text-decoration: none; }
    .wordmark { display: flex; flex-direction: column; font: 700 14px/14px "Liberation Sans", sans-serif; white-space: nowrap; }
    .wordmark .top { color: #d0402c; font-family: "Liberation Sans Narrow", "Roboto Condensed", Roboto, sans-serif; font-size: 16px; }
    .topbar { display: flex; align-items: center; height: 38px; background: #d43d26; color: #fff; padding: 0 5px 0 18px; }
    .bar-btn { display: grid; place-items: center; padding: 0; border: 0; background: none; width: 20px; height: 38px; }
    .spacer { flex: 1; }
    .actions { display: flex; align-items: center; gap: 19px; }
    .user { display: flex; align-items: center; gap: 6px; margin-left: 12px; padding: 0; border: 0; background: none; font-size: 11px; font-weight: 700; }
    .user .name { margin-right: 2px; }

    .nav { overflow: hidden; }
    .nav ul { margin: 0; padding: 0; list-style: none; }
    .nav li { height: 32px; }
    .nav li:nth-child(even) { height: 33px; }
    .link { display: flex; align-items: center; gap: 10px; height: 100%; padding: 0 12px 0 7px; color: #222; font-size: 11px; text-decoration: none; white-space: nowrap; }
    .link .icon { color: #000; }
    .link.sub { padding-left: 23px; }
    .link.parent { font-weight: 500; color: #000; }
    .link.active { background: #efefef; color: #d43d26; border-right: 1px solid #d43d26; }
    .caret { margin-left: auto; display: flex; }
    .caret.open .icon { color: #d43d26; }
    .badge { display: grid; place-items: center; width: 16px; height: 16px; margin-left: -2px; border-radius: 8px; color: #fff; font-size: 10px; font-weight: 500; }
    .badge.red { background: #d43d26; }
    .badge.blue { background: #668ce8; }

    .main { display: flex; flex-direction: column; gap: 6px; min-height: 0; padding: 7px 0 0 5px; background: #f3f3f5; border-left: 1px solid #e8e8ea; }
    .card { background: #fff; border-radius: 4px; border-bottom: 1px solid #8f9192; box-shadow: 0 0 3px rgb(0 0 0 / 12%); }

    .planner { display: grid; grid-template-columns: 210px minmax(0, 1fr); gap: 9px; padding: 3px 4px 8px 13px; border-top-right-radius: 0; border-bottom-right-radius: 0; }
    .picker { display: flex; flex-direction: column; gap: 4px; padding-top: 10px; }
    .field { position: relative; display: flex; align-items: center; height: 44px; border: 1px solid #bbb; border-radius: 4px; font-size: 13px; }
    .field label { position: absolute; top: -9px; left: 9px; padding: 0 5px; background: #fff; font-size: 10px; line-height: 16px; }
    .field select { appearance: none; width: 100%; height: 100%; padding: 0 11px; border: 0; background: none; }
    .field .mark { position: absolute; right: 11px; color: #666; pointer-events: none; }
    .field.dates { padding: 0 11px; color: #111; }
    .field.dates input { width: 62px; padding: 0; border: 0; background: none; overflow: hidden; }
    .field.dates .to { color: #777; margin-right: 13px; }
    .field.dates .cal { margin-left: auto; padding: 0; border: 0; background: none; color: #666; }
    .steps { display: flex; gap: 4px; }
    .step { flex: 1; display: grid; place-items: center; height: 30px; padding: 0; border: 1px solid #cf4532; border-radius: 4px; background: #fff; color: #cf4532; }
    .step.today { flex: 0 0 80px; font-size: 12px; font-weight: 500; }
    .days { display: grid; grid-template-columns: repeat(7, minmax(0, 1fr)); gap: 4px; }
    .day { display: flex; flex-direction: column; align-items: center; height: 136px; padding: 25px 0 0; border: 1px solid #cfcfcf; border-radius: 5px; background: #fff; }
    .day.current { margin-top: 4px; border-color: #c3cfd9; box-shadow: 0 0 3px #a9c6dd; }
    .date { line-height: 24px; font-size: 13px; font-weight: 700; color: #888; }
    .date .name { font-size: 17px; color: #000; }
    .counts { display: grid; grid-template-columns: repeat(3, 1fr); width: 72%; text-align: center; }
    .current .counts { width: 76%; }
    .count.a { color: #6c84e2; }
    .count.b { color: #41802f; }
    .count.c { color: #dca03d; }
    .forecast { display: flex; align-items: center; gap: 7px; margin-top: 9px; padding-left: 8px; height: 20px; font-weight: 500; color: #000; }

    .work { flex: 1; min-height: 0; display: grid; grid-template-columns: 1027fr 673fr; gap: 7px; }
    .left { display: flex; flex-direction: column; gap: 7px; min-height: 0; min-width: 0; }
    .trips { flex: 345 1 0; position: relative; border-radius: 0; }
    .orders { flex: 235 1 0; display: flex; min-height: 0; margin-left: 1px; overflow: hidden; border-bottom: 0; border-bottom-left-radius: 0; border-bottom-right-radius: 0; }
    .pane { flex: 1; min-width: 0; }
    .scroll { width: 11px; display: flex; flex-direction: column; align-items: center; gap: 4px; padding-top: 4px; }
    .scroll .up { width: 0; height: 0; border: 3px solid transparent; border-top: 0; border-bottom: 5px solid #999; }
    .scroll .thumb { width: 5px; flex: 1; border-radius: 3px 3px 0 0; background: #c1c1c1; }
    .head { display: flex; align-items: center; height: 51px; padding: 0 16px 0 13px; }
    .orders .head { height: 53px; padding-right: 8px; }
    .head h2 { margin: 0 17px 0 0; font-size: 19px; line-height: 24px; font-weight: 500; color: #000; }
    .filter { padding: 0; border: 0; background: none; color: #222; }
    .tools { display: flex; margin-left: auto; }
    .tool { display: grid; place-items: center; width: 51px; height: 28px; padding: 0; border: 0; background: none; color: #111; }
    .tool.tight { width: 41px; }
    .tool.tight:last-child .icon { width: 16px; height: 16px; }
    .tool.green { color: #6fca5b; }
    .tool.blue { color: #6b8ee6; }
    .tool.red { color: #d04a3f; }
    .tool.off { color: #bdbdbd; }
    .tool.teal { color: #66c2a0; }

    .grid { width: 100%; table-layout: fixed; border-collapse: separate; border-spacing: 0; }
    .grid th, .grid td { height: 36px; padding: 0 0 0 13px; text-align: left; white-space: nowrap; border-bottom: 1px solid #dedede; color: #111; }
    .grid th { height: 30px; font-weight: 500; color: #000; }
    .grid tbody tr:first-child td { background: #fafafa; }
    .grid tbody tr.picked td { background: #f5ecda; }
    .trips .grid tbody tr:last-child td { border-bottom: 0; height: 35px; }
    .orders .grid td { height: 39px; }
    .orders .grid tbody tr:nth-child(even) td { height: 40px; }
    .orders .grid .act { padding-left: 28px; }
    .nr { display: flex; align-items: center; gap: 7px; }
    .pill { display: inline-flex; align-items: center; justify-content: center; gap: 8px; width: 51px; height: 25px; padding: 0; border: 1px solid #cf4532; border-radius: 4px; background: none; color: #cf4532; font-size: 11px; font-weight: 500; vertical-align: middle; }
    .pill.green { border-color: #77c466; color: #77c466; }
    .pill.blue { border-color: #6b8ee0; color: #6b8ee0; }
    .pill.small { height: 20px; }
    .sent { color: #6fca5b; }
    .box { appearance: none; display: block; width: 15px; height: 15px; margin: 0 0 0 2px; border: 2px solid #777; border-radius: 2px; background: #fff center / 15px 15px no-repeat; }
    .box:checked, .box:indeterminate { border: 0; background-color: #777; }
    .box:checked { background-color: #6f6a60; background-image: url("data:image/svg+xml,%3Csvg xmlns='http://www.w3.org/2000/svg' viewBox='0 0 15 15'%3E%3Cpath d='M2.500 7.800 6 11.200 12.500 4.500' fill='none' stroke='%23fff' stroke-width='1.700'/%3E%3C/svg%3E"); }
    .box:indeterminate { background-image: url("data:image/svg+xml,%3Csvg xmlns='http://www.w3.org/2000/svg' viewBox='0 0 15 15'%3E%3Cpath d='M3.500 7.500h8' stroke='%23fff' stroke-width='1.700'/%3E%3C/svg%3E"); }
    .muted { color: #b5b5b5; }
    .stop { color: #d9584c; }
    .act .icon { display: block; }

    .tip { position: absolute; left: 49px; top: 152px; height: 19px; padding: 0 6px; border-radius: 4px; background: #616161; color: #fff; font-size: 10px; line-height: 19px; font-weight: 700; }
    .pointer { position: absolute; left: 32px; top: 181px; }

    .map-card { display: flex; flex-direction: column; min-width: 0; padding: 0 0 0 6px; border: 1px solid #cfcfcf; border-right: 0; border-bottom: 0; border-radius: 0; }
    .map-head { display: flex; align-items: center; justify-content: space-between; height: 26px; padding: 0 1px 0 2px; margin-bottom: 6px; font-weight: 700; font-size: 11px; color: #000; }
    .map-head h2 { margin: 0; font: inherit; }
    .fold { padding: 0; border: 0; background: none; color: #d43d26; }
    route-map { flex: 1; }
  `;

  private navItem(item: NavItem) {
    const parent = item.open !== undefined;
    return html`<li>
      <a class=${classMap({ link: true, sub: !!item.sub, active: !!item.active, parent })} href="#">
        ${icon(item.icon)}<span>${item.label}</span>
        ${item.badge ? html`<span class="badge ${item.tone}">${item.badge}</span>` : nothing}
        ${parent ? html`<span class="caret ${item.open ? "open" : ""}">${icon(item.open ? "up" : "down")}</span>` : nothing}
      </a>
    </li>`;
  }

  private planner() {
    return html`<section class="card planner">
      <form class="picker">
        <div class="field">
          <label for="city">Stad</label>
          <select id="city"><option>Oslo</option></select>
          <span class="mark">${icon("down")}</span>
        </div>
        <div class="field dates">
          <input aria-label="Van" value="11-11-2025" />
          <span class="to">${icon("arrow", 15)}</span>
          <input aria-label="Tot" value="11-11-2025" />
          <button type="button" class="cal" aria-label="Kalender">${icon("event")}</button>
        </div>
        <div class="steps">
          <button type="button" class="step" aria-label="Week terug">${icon("first")}</button>
          <button type="button" class="step" aria-label="Dag terug">${icon("left")}</button>
          <button type="button" class="step today">VANDAAG</button>
          <button type="button" class="step" aria-label="Dag vooruit">${icon("right")}</button>
          <button type="button" class="step" aria-label="Week vooruit">${icon("last")}</button>
        </div>
      </form>
      <div class="days">
        ${DAYS.map(
          ([name, date, a, b, c, kind, temp], i) => html`<div class=${classMap({ day: true, current: i === 0 })}>
            <div class="date"><span class="name">${name}</span>${date}</div>
            <div class="counts"><span class="count a">${a}</span><span class="count b">${b}</span><span class="count c">${c}</span></div>
            <div class="forecast">${weather(kind)}<span>${temp}</span></div>
          </div>`
        )}
      </div>
    </section>`;
  }

  private trips() {
    return html`<section class="card trips">
      <div class="head">
        <h2>Ritten</h2>
        <button class="filter" aria-label="Filter ritten">${icon("filter")}</button>
        ${tools(TRIP_TOOLS)}
      </div>
      <table class="grid">
        ${cols(TRIP_COLS)}
        <thead><tr>${TRIP_COLS.map(([t]) => html`<th>${t}</th>`)}</tr></thead>
        <tbody>
          ${TRIPS.map(
            (t) => html`<tr class=${classMap({ picked: t.sent })}>
              <td><div class="nr"><button class="pill">${t.nr}</button><span class=${classMap({ sent: t.sent })}>${icon("phone")}</span></div></td>
              ${t.cells.map((c) => html`<td>${c}</td>`)}
              <td><button class="pill small ${t.tone}">${t.action}</button></td>
            </tr>`
          )}
        </tbody>
      </table>
      <div class="tip" role="tooltip">Verstuurd</div>
      <svg class="pointer" width="100" height="103" viewBox="0 0 100 103" aria-hidden="true">
        <path d="M48 1Q49.500-.5 51 1L99 50Q100 54 98 54H75V103H25Q23 103 23 101V54H1Q-1 52 1 50Z" fill="#22b14c" />
      </svg>
    </section>`;
  }

  private orders() {
    return html`<section class="card orders">
      <div class="pane">
        <div class="head">
          <h2>Orders</h2>
          <button class="filter" aria-label="Filter orders">${icon("filter")}</button>
          ${tools(ORDER_TOOLS)}
        </div>
        <table class="grid">
          ${cols(ORDER_COLS)}
          <thead>
            <tr>${ORDER_COLS.map(([t]) => html`<th>${t || html`<input class="box" type="checkbox" aria-label="Alles selecteren" .indeterminate=${true} />`}</th>`)}</tr>
          </thead>
          <tbody>
            ${ORDERS.map(
              (o) => html`<tr class=${classMap({ picked: o.checked })}>
                <td><input class="box" type="checkbox" aria-label=${`Selecteer ${o.nr}`} .checked=${o.checked} /></td>
                <td><button class=${classMap({ pill: true, green: o.checked })}>${o.nr}</button></td>
                <td><button class="pill">${icon("clip", 13)}0</button></td>
                <td>${o.from}</td>
                <td>${o.to}</td>
                <td>${o.count}</td>
                <td class="act">${o.checked ? html`<span class="stop">${icon("minus", 18)}</span>` : html`<span class="muted">${icon("truck", 19)}</span>`}</td>
              </tr>`
            )}
          </tbody>
        </table>
      </div>
      <div class="scroll"><span class="up"></span><span class="thumb"></span></div>
    </section>`;
  }

  render() {
    return html`<div class="shell">
      <a class="brand" href="#" aria-label="Cargo Manager More">
        <svg width="35" height="26" viewBox="0 0 35 26" aria-hidden="true">
          <path d="M13.500 3.600A9 9 0 1 0 20 17.500" fill="none" stroke="#d0402c" stroke-width="5.500" />
          <circle cx="12.500" cy="12.500" r="3" fill="#d0402c" />
          <path d="M12 1h8l4.500 8L29 1h6v23h-6.500V10.500L24.500 18h-2L14.500 6.500z" fill="#111" />
        </svg>
        <span class="wordmark"><span class="top">CARGO</span><span>MANAGER | More</span></span>
      </a>
      <header class="topbar">
        <button class="bar-btn" aria-label="Menu">${icon("lines")}</button>
        <span class="spacer"></span>
        <div class="actions">
          <button class="bar-btn" aria-label="Video's">${icon("video")}</button>
          <button class="bar-btn" aria-label="WhatsApp">${icon("whatsapp")}</button>
          <button class="bar-btn" aria-label="Help">${icon("help")}</button>
        </div>
        <button class="user">${icon("person", 17)}<span class="name">JAN KLAASSEN</span>${icon("expand", 16)}</button>
      </header>
      <nav class="nav"><ul>${NAV.map((n) => this.navItem(n))}</ul></nav>
      <main class="main">
        ${this.planner()}
        <div class="work">
          <div class="left">${this.trips()}${this.orders()}</div>
          <section class="card map-card">
            <div class="map-head"><h2>Kaart</h2><button class="fold" aria-label="Kaart inklappen">${icon("right", 18)}</button></div>
            <route-map></route-map>
          </section>
        </div>
      </main>
    </div>`;
  }
}
